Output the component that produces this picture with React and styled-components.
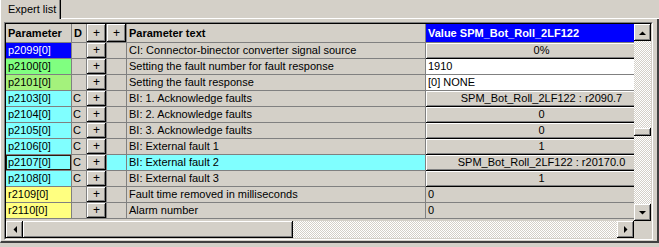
import React from "react";
import styled, { createGlobalStyle, css } from "styled-components";

const GlobalStyle = createGlobalStyle`
  html, body {
    margin: 0;
    padding: 0;
    background: #d4d0c8;
  }
  body {
    font-family: "Liberation Sans", Arial, sans-serif;
    font-size: 11px;
    color: #000;
  }
`;

const cellColors = {
  blue: "#0000ff",
  green: "#80ff80",
  lime: "#a4f27c",
  cyan: "#80ffff",
  yellow: "#ffff80",
};

const rows = [
  { id: "p2099[0]", color: "blue", d: "", text: "CI: Connector-binector converter signal source", value: "0%", kind: "button" },
  { id: "p2100[0]", color: "green", d: "", text: "Setting the fault number for fault response", value: "1910", kind: "input" },
  { id: "p2101[0]", color: "lime", d: "", text: "Setting the fault response", value: "[0] NONE", kind: "input" },
  { id: "p2103[0]", color: "cyan", d: "C", text: "BI: 1. Acknowledge faults", value: "SPM_Bot_Roll_2LF122 : r2090.7", kind: "button" },
  { id: "p2104[0]", color: "cyan", d: "C", text: "BI: 2. Acknowledge faults", value: "0", kind: "button" },
  { id: "p2105[0]", color: "cyan", d: "C", text: "BI: 3. Acknowledge faults", value: "0", kind: "button" },
  { id: "p2106[0]", color: "cyan", d: "C", text: "BI: External fault 1", value: "1", kind: "button" },
  { id: "p2107[0]", color: "cyan", d: "C", text: "BI: External fault 2", value: "SPM_Bot_Roll_2LF122 : r20170.0", kind: "button", selected: true },
  { id: "p2108[0]", color: "cyan", d: "C", text: "BI: External fault 3", value: "1", kind: "button" },
  { id: "r2109[0]", color: "yellow", d: "", text: "Fault time removed in milliseconds", value: "0", kind: "plain" },
  { id: "r2110[0]", color: "yellow", d: "", text: "Alarm number", value: "0", kind: "plain" },
];

const raised = css`
  background: #d4d0c8;
  box-shadow: inset -1px -1px #000, inset 1px 1px #fff, inset -2px -2px #808080;
`;

const dither = css`
  background: repeating-conic-gradient(#fff 0 25%, #d4d0c8 0 50%) 0 0 / 2px 2px;
`;

const Page = styled.div`
  width: 659px;
  height: 247px;
  overflow: hidden;
  background: #d4d0c8;
`;

const TabStrip = styled.div`
  display: flex;
  height: 19px;
`;

const Tab = styled.div`
  width: 61px;
  height: 19px;
  box-sizing: border-box;
  border-left: 1px solid #fff;
  border-right: 1px solid #000;
  box-shadow: inset -1px 0 #808080;
  padding-left: 7px;
  line-height: 18px;
`;

const TabFill = styled.div`
  flex: 1;
  border-bottom: 1px solid #fff;
`;

const Panel = styled.div`
  border-left: 1px solid #fff;
  border-right: 2px solid #404040;
  border-bottom: 2px solid #404040;
  padding: 3px 4px 1px 3px;
`;

const Frame = styled.div`
  border: 1px solid;
  border-color: #808080 #fff #fff #808080;
`;

const FrameInner = styled.div`
  border: 1px solid;
  border-color: #000 #d4d0c8 #d4d0c8 #000;
  display: grid;
  grid-template-columns: 628px 17px;
  grid-template-rows: 197px 17px;
`;

const Table = styled.div`
  overflow: hidden;
  display: flex;
  flex-direction: column;
`;

const Row = styled.div`
  display: grid;
  grid-template-columns: 66px 15px 20px 20px 299px 231px;
  height: ${(p) => (p.$header ? 19 : 16)}px;
  flex-shrink: 0;
`;

const Cell = styled.div`
  box-sizing: border-box;
  border-right: 1px solid #808080;
  border-bottom: 1px solid #808080;
  padding-left: ${(p) => p.$pad ?? 2}px;
  line-height: ${(p) => (p.$header ? 18 : 15)}px;
  white-space: nowrap;
  overflow: hidden;
  background: ${(p) => p.$bg || "#d4d0c8"};
  color: ${(p) => p.$fg || "#000"};
  font-weight: ${(p) => (p.$header ? "bold" : "normal")};
  ${(p) =>
    p.$focused &&
    css`
      box-shadow: inset 0 0 0 1px #2a1a10;
    `}
`;

const ButtonCell = styled.div`
  box-sizing: border-box;
  border-right: 1px solid #808080;
  border-bottom: 1px solid #808080;
  background: ${(p) => p.$bg || "#d4d0c8"};
`;

const PlusButton = styled.div`
  ${raised};
  height: 100%;
  text-align: center;
  line-height: ${(p) => (p.$header ? 18 : 15)}px;
  font-size: 12px;
`;

const ValueHead = styled.div`
  background: #0000ff;
  color: #fff;
  font-weight: bold;
  padding-left: 2px;
  line-height: 18px;
  border-bottom: 1px solid #808080;
  white-space: nowrap;
`;

const ValueButton = styled.div`
  ${raised};
  text-align: center;
  line-height: 15px;
  white-space: nowrap;
`;

const ValueField = styled.div`
  box-sizing: border-box;
  background: ${(p) => (p.$white ? "#fff" : "#d4d0c8")};
  border-bottom: 1px solid #808080;
  padding-left: 2px;
  line-height: 15px;
  white-space: nowrap;
`;

const VScroll = styled.div`
  display: flex;
  flex-direction: column;
`;

const HScroll = styled.div`
  display: flex;
`;

const ArrowButton = styled.div`
  ${raised};
  width: 17px;
  height: 17px;
  flex-shrink: 0;
  display: flex;
  align-items: center;
  justify-content: center;
`;

const VTrack = styled.div`
  ${dither};
  flex: 1;
  display: flex;
  flex-direction: column;
`;

const VThumb = styled.div`
  ${raised};
  height: 8px;
  margin-top: 87px;
`;

const HThumb = styled.div`
  ${raised};
  width: 270px;
  height: 17px;
  flex-shrink: 0;
`;

const HTrack = styled.div`
  ${dither};
  flex: 1;
`;

const Corner = styled.div`
  background: #d4d0c8;
`;

function Arrow({ dir }) {
  const pts = {
    up: "0,4 7,4 3.5,0.5",
    down: "0,0 7,0 3.5,3.5",
    left: "4,0 4,7 0.5,3.5",
    right: "0,0 0,7 3.5,3.5",
  }[dir];
  const vertical = dir === "up" || dir === "down";
  return (
    <svg width={vertical ? 7 : 4} height={vertical ? 4 : 7} viewBox={vertical ? "0 0 7 4" : "0 0 4 7"}>
      <polygon points={pts} fill="#000" />
    </svg>
  );
}

function ValueCell({ row }) {
  if (row.kind === "button") return <ValueButton>{row.value}</ValueButton>;
  return <ValueField $white={row.kind === "input"}>{row.value}</ValueField>;
}

export default function App() {
  return (
    <Page>
      <GlobalStyle />
      <TabStrip>
        <Tab>Expert list</Tab>
        <TabFill />
      </TabStrip>
      <Panel>
        <Frame>
          <FrameInner>
            <Table>
              <Row $header>
                <Cell $header>Parameter</Cell>
                <Cell $header>D</Cell>
                <ButtonCell>
                  <PlusButton $header>+</PlusButton>
                </ButtonCell>
                <ButtonCell>
                  <PlusButton $header>+</PlusButton>
                </ButtonCell>
                <Cell $header>Parameter text</Cell>
                <ValueHead>Value SPM_Bot_Roll_2LF122</ValueHead>
              </Row>
              {rows.map((row) => (
                <Row key={row.id}>
                  <Cell
                    $bg={cellColors[row.color]}
                    $fg={row.color === "blue" ? "#fff" : "#000"}
                    $focused={row.selected}
                  >
                    {row.id}
                  </Cell>
                  <Cell $pad={1}>{row.d}</Cell>
                  <ButtonCell>
                    <PlusButton>+</PlusButton>
                  </ButtonCell>
                  <ButtonCell $bg={row.selected ? cellColors.cyan : undefined} />
                  <Cell $bg={row.selected ? cellColors.cyan : undefined}>{row.text}</Cell>
                  <ValueCell row={row} />
                </Row>
              ))}
            </Table>
            <VScroll>
              <ArrowButton>
                <Arrow dir="up" />
              </ArrowButton>
              <VTrack>
                <VThumb />
              </VTrack>
              <ArrowButton>
                <Arrow dir="down" />
              </ArrowButton>
            </VScroll>
            <HScroll>
              <ArrowButton>
                <Arrow dir="left" />
              </ArrowButton>
              <HThumb />
              <HTrack />
              <ArrowButton>
                <Arrow dir="right" />
              </ArrowButton>
            </HScroll>
            <Corner />
          </FrameInner>
        </Frame>
      </Panel>
    </Page>
  );
}
